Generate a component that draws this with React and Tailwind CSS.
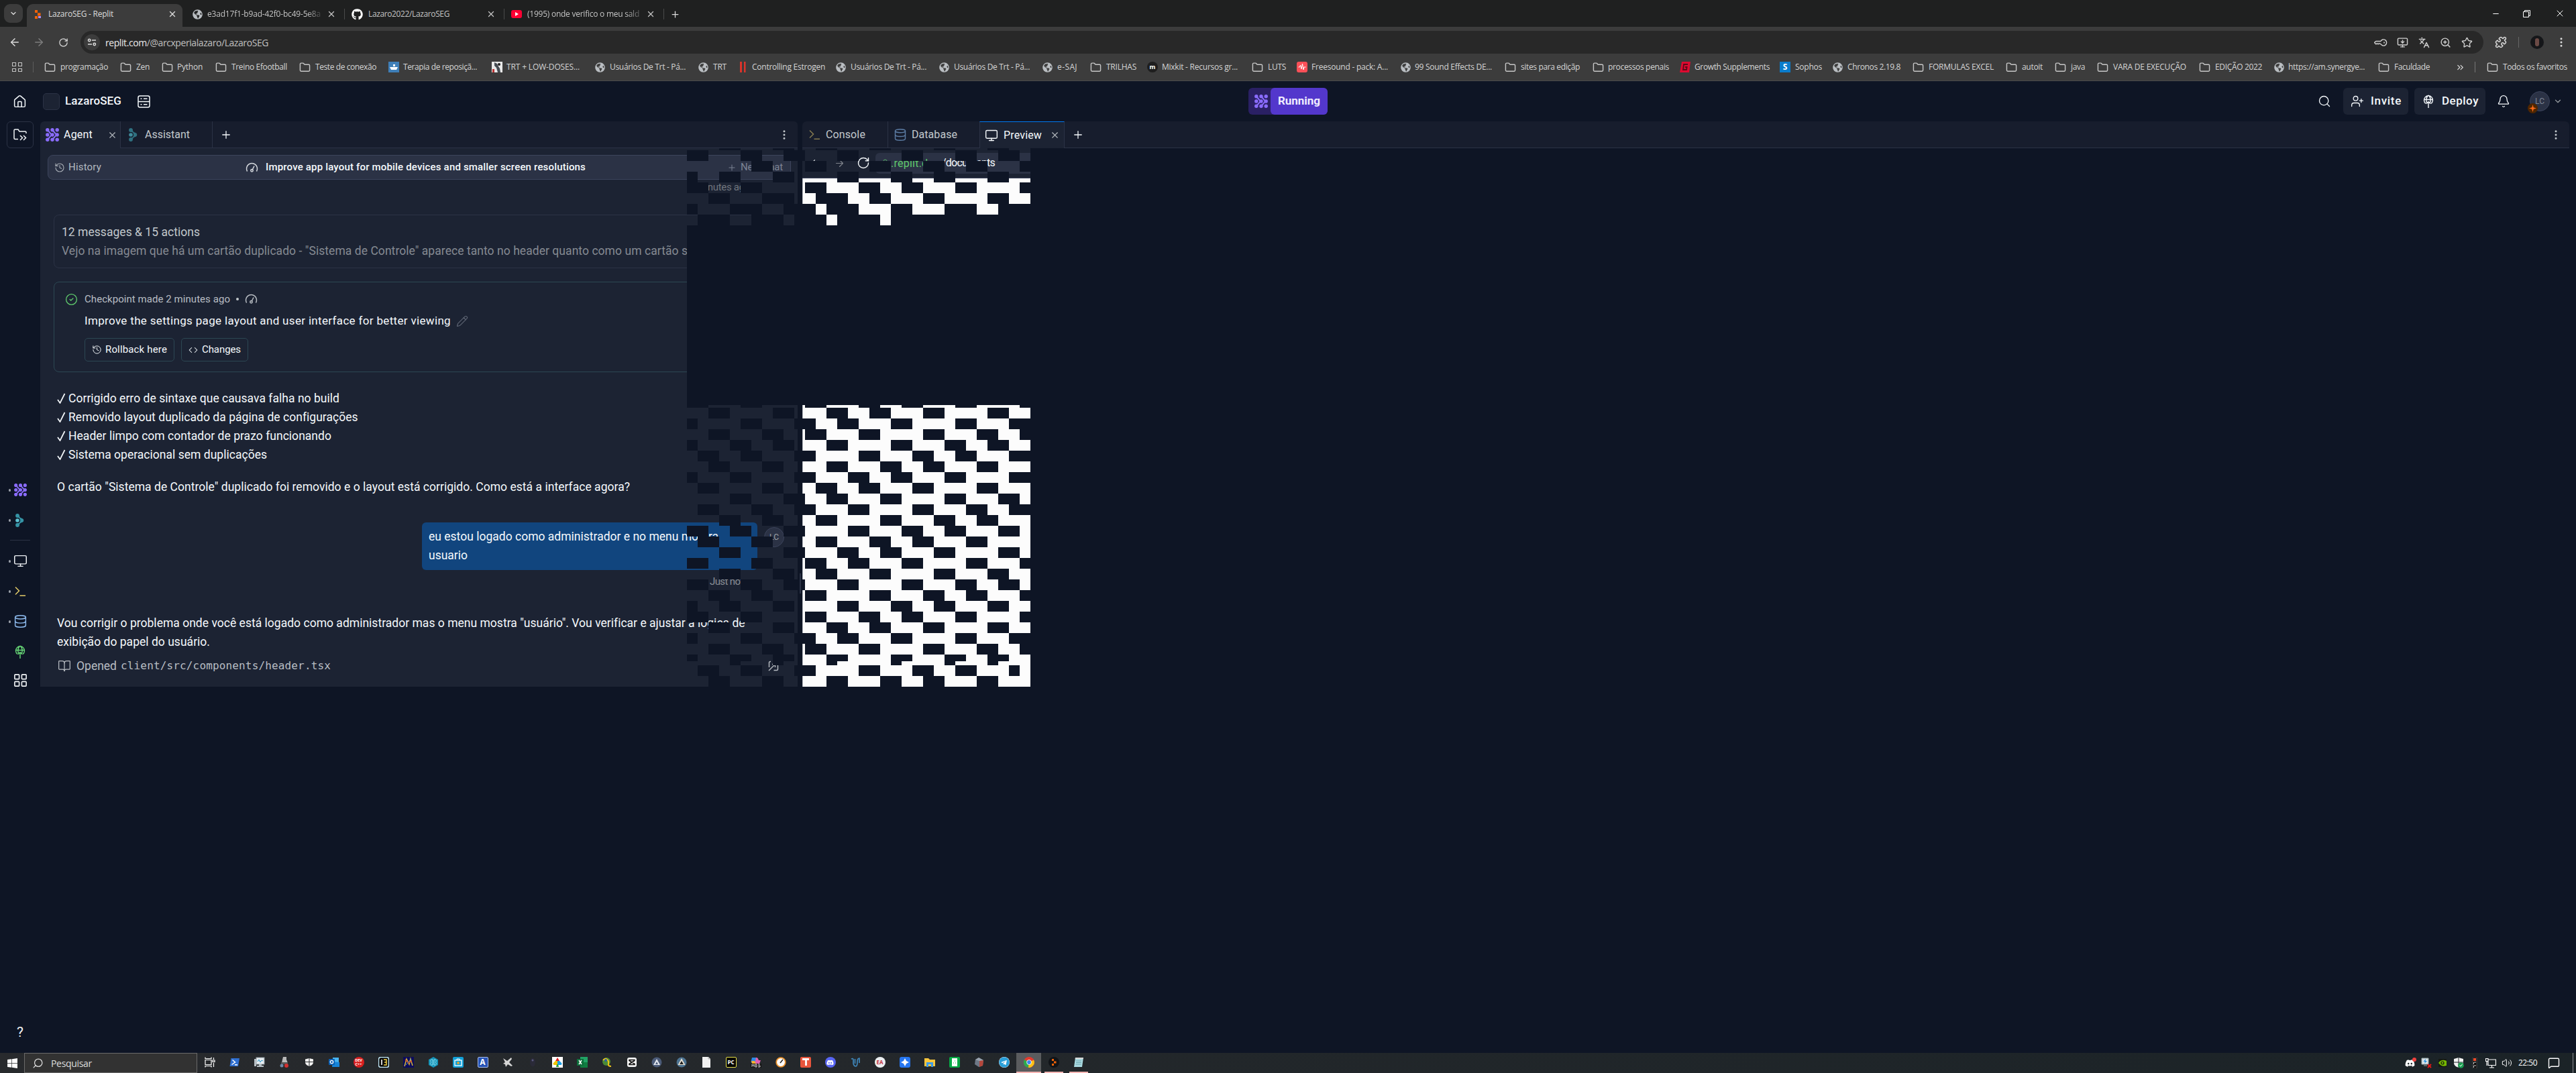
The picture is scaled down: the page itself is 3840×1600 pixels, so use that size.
import React, { useLayoutEffect, useRef, useState } from "react";
import {
  Home, Search, UserPlus, Bell, ChevronDown, X, Plus, EllipsisVertical, History, Pencil,
  Code, CircleCheck, Monitor, Database, LayoutGrid, BookOpen, ArrowLeft, ArrowRight, RotateCw, Star, Puzzle,
  KeyRound, MonitorDown, ZoomIn, Languages, Lock, Folder, MessageSquare, Volume2,
  ChevronsRight, Minus,
} from "lucide-react";
import { FaGithub, FaDiscord, FaTelegram, FaWindows, FaGlobeAmericas } from "react-icons/fa";

/* Text set to an exact advance width by spreading the letters. */
function Fit({ w, className = "", children }) {
  const ref = useRef(null);
  const [ls, setLs] = useState(0);
  useLayoutEffect(() => {
    const el = ref.current;
    const natural = el.getBoundingClientRect().width;
    setLs((w - natural) / el.textContent.length);
  }, [w]);
  return (
    <span className={"block shrink-0 whitespace-pre " + className} style={{ width: w }}>
      <span ref={ref} style={{ letterSpacing: ls }}>{children}</span>
    </span>
  );
}

const AgentIcon = ({ size = 20 }) => (
  <svg width={size} height={size} viewBox="0 0 20 20" fill="#8A6CFF" className="shrink-0">
    {[2.8, 10, 17.2].map((x) => (
      <g key={x}>
        <circle cx={x} cy="2.800" r="2.700" />
        <circle cx={x} cy="10" r="2.700" />
        <circle cx={x} cy="17.200" r="2.700" />
      </g>
    ))}
    <path d="M3.500 3.500 8 8.800a1.500 1.500 0 0 1 0 2.400L3.500 16.500M10.700 3.500l4.500 5.300a1.500 1.500 0 0 1 0 2.400l-4.500 5.300" fill="none" stroke="#8A6CFF" strokeWidth="2" />
  </svg>
);

const AssistantIcon = ({ dim }) => (
  <svg width="14" height="20" viewBox="0 0 14 20" fill={dim ? "#2f7080" : "#3593a5"} className="shrink-0">
    <circle cx="3" cy="3" r="2.900" />
    <circle cx="3" cy="17" r="2.900" />
    <path d="M5.600 1.800c.3 3 1.200 4.300 4.400 5.200a3.100 3.100 0 0 1 0 6c-3.200.9-4.100 2.200-4.400 5.200L2 15c3.500-.5 5.200-2.500 5.200-5S5.500 5.500 2 5z" />
    <circle cx="3" cy="10" r="2.800" fill={dim ? "#3f8b9b" : "#5cc3d3"} />
  </svg>
);

const DeployIcon = ({ className = "" }) => (
  <svg width="18" height="20" viewBox="0 0 18 20" fill="none" stroke="currentColor" strokeWidth="1.400" className={"shrink-0 " + className}>
    <path d="M5 13.400A6.500 6.500 0 1 1 13 13.400M2.500 7.500h13M9 1c-4 3.500-4 9.500-1.500 12M9 1c4 3.500 4 9.500 1.500 12M9 20v-9M5.800 13.800 9 10.700l3.200 3.100" />
  </svg>
);

const PromptIcon = ({ className = "" }) => (
  <svg width="18" height="18" viewBox="0 0 18 18" fill="none" stroke="currentColor" strokeWidth="1.500" className={"shrink-0 " + className}>
    <path d="M2 2.500 7.500 8 2 13.500M8.500 15.300H17" />
  </svg>
);

const GaugeIcon = () => (
  <svg width="19" height="16" viewBox="0 0 19 16" fill="none" stroke="currentColor" strokeWidth="1.500" className="shrink-0">
    <path d="M2.600 13.500A8 8 0 1 1 16.400 13.500M13 5.500l-3 6" />
    <circle cx="9.500" cy="12.300" r="1.700" />
  </svg>
);

const FolderChevrons = () => (
  <svg width="20" height="20" viewBox="0 0 20 20" fill="none" stroke="currentColor" strokeWidth="1.500">
    <path d="M7 16.500H2.500A1.500 1.500 0 0 1 1 15V3.500A1.500 1.500 0 0 1 2.500 2H7l2 3h8.500A1.500 1.500 0 0 1 19 6.500V8M10 11l3.500 3.500L10 18M15 11l3.500 3.500L15 18" />
  </svg>
);

const OpenFileIcon = () => (
  <svg width="16" height="16" viewBox="0 0 16 16" fill="none" stroke="currentColor" strokeWidth="1.400" className="ml-[652px] shrink-0">
    <path d="M4 1.500H3A1.500 1.500 0 0 0 1.500 3v7M1 15 10.500 5.500M6 5.500h4.500V10M12.500 6H13a1.500 1.500 0 0 1 1.500 1.500V13a1.500 1.500 0 0 1-1.500 1.500H8.500" />
  </svg>
);

const Globe = () => <FaGlobeAmericas size={15} className="shrink-0 text-[#b9bdc1]" />;

const bookmarkIcon = {
  f: <Folder size={17} strokeWidth={2} className="text-[#c7c7c7]" />,
  g: <Globe />,
  boat: (
    <svg width="16" height="16" viewBox="0 0 16 16"><rect width="16" height="16" fill="#3f7fb8" /><path d="M2 8h12l-2 4H4zM7 4h3v3H7z" fill="#fff" /></svg>
  ),
  trt: (
    <svg width="16" height="16" viewBox="0 0 16 16"><rect width="16" height="16" fill="#e8e8e8" /><path d="M4 1l4 2 2 4 2 3 1 6H9L7 9 4 6z" fill="#444b52" /><circle cx="11" cy="4" r="2" fill="#222" /><path d="M1 11h3v5H1z" fill="#b33" /></svg>
  ),
  red: <svg width="16" height="16" viewBox="0 0 16 16"><path d="M2 0h3v16H2zM8 0h2.500v16H8z" fill="#d9342b" /></svg>,
  mix: <span className="flex h-4 w-4 items-center justify-center rounded-full bg-[#1e1e1e] text-[9px] font-bold text-white">m</span>,
  free: (
    <svg width="16" height="16" viewBox="0 0 16 16"><rect width="16" height="16" rx="3" fill="#fb5058" /><path d="M2.500 8h2l1-3 1.500 6L8.500 3l1.500 9 1-4h2.500" stroke="#fff" fill="none" /></svg>
  ),
  growth: (
    <svg width="16" height="16" viewBox="0 0 16 16"><path d="M3 0h13l-2 16H0z" fill="#dd0a30" /><path d="M12 4H6L5 12h5l.600-4H8" stroke="#5c0818" strokeWidth="1.800" fill="none" /></svg>
  ),
  sophos: <span className="flex h-4 w-4 items-center justify-center bg-[#0a7ccc] text-[12px] font-bold text-white">S</span>,
};

/* icon, label, label width, offset of the label, width of the whole cell */
const bookmarks = [
  ["f", "programação", 71, 24, 113], ["f", "Zen", 20, 24, 62], ["f", "Python", 38, 23, 80], ["f", "Treino Efootball", 83, 24, 125],
  ["f", "Teste de conexão", 91, 24, 133], ["boat", "Terapia de reposiçã...", 110, 22, 154], ["trt", "TRT + LOW-DOSES...", 109, 22, 154],
  ["g", "Usuários De Trt - Pá...", 113, 22, 154], ["g", "TRT", 20, 22, 60], ["red", "Controlling Estrogen", 109, 20, 145],
  ["g", "Usuários De Trt - Pá...", 113, 22, 154], ["g", "Usuários De Trt - Pá...", 113, 22, 154], ["g", "e-SAJ", 30, 22, 71],
  ["f", "TRILHAS", 45, 24, 85], ["mix", "Mixkit - Recursos gr...", 113, 22, 156], ["f", "LUTS", 27, 24, 67],
  ["free", "Freesound - pack: A...", 114, 22, 155], ["g", "99 Sound Effects DE...", 115, 21, 155], ["f", "sites para ediçãp", 88, 24, 131],
  ["f", "processos penais", 91, 23, 130], ["growth", "Growth Supplements", 112, 22, 149], ["sophos", "Sophos", 40, 23, 79],
  ["g", "Chronos 2.19.8", 79, 22, 119], ["f", "FORMULAS EXCEL", 97, 24, 139], ["f", "autoit", 31, 24, 73], ["f", "java", 21, 24, 63],
  ["f", "VARA DE EXECUÇÃO", 109, 24, 152], ["f", "EDIÇÃO 2022", 70, 24, 112], ["g", "https://am.synergye...", 114, 21, 155], ["f", "Faculdade", 53, 24, 115],
];

function BookmarksBar() {
  return (
    <div className="flex h-10 w-full items-center text-[12px] text-[#d5d5d5]">
      <span className="ml-[18px] grid h-[14px] w-[15px] grid-cols-2 gap-[3px]">
        {[0, 1, 2, 3].map((i) => <i key={i} className="border-[1.5px] border-[#c7c7c7]" />)}
      </span>
      <i className="ml-4 mr-4 h-4 w-px bg-[#5d5d5d]" />
      {bookmarks.map(([icon, label, w, dx, cell], i) => (
        <div key={i} className="flex shrink-0 items-center" style={{ width: cell }}>
          <span className="flex shrink-0 items-center" style={{ width: dx }}>{bookmarkIcon[icon]}</span>
          <Fit w={w}>{label}</Fit>
        </div>
      ))}
      <ChevronsRight size={15} />
      <i className="ml-[14px] mr-[17px] h-4 w-px bg-[#777]" />
      <span className="flex w-6">{bookmarkIcon.f}</span>
      <Fit w={96}>Todos os favoritos</Fit>
    </div>
  );
}

function BrowserChrome() {
  return (
    <div className="h-[121px] w-full border-b border-[#4b4b4b] bg-[#3c3c3c] font-['Open_Sans','Noto_Sans',sans-serif] text-[#dcdcdc]">
      <div className="flex h-10 items-end bg-[#1f2020] text-[12px]">
        <div className="mx-1.5 flex h-7 w-7 items-center justify-center self-center rounded-[9px] bg-[#3c3c3c]"><ChevronDown size={12} strokeWidth={2.5} /></div>
        <div className="flex h-[34px] w-[232px] items-center rounded-t-[9px] bg-[#3c3c3c] pb-1">
          <svg width="13" height="13" viewBox="0 0 13 13" className="ml-[10px] mr-[9px]"><path d="M2 0h4v4H2zM2 9h4v4H2z" fill="#f26207" /><path d="M6 4.300h4.500v4.300H6z" fill="#f26207" /><path d="M7 9h4v3H7z" fill="#a78bfa" /></svg>
          <Fit w={97}>LazaroSEG - Replit</Fit>
          <X size={14} strokeWidth={2.200} className="ml-[81px]" />
        </div>
        <div className="flex h-[34px] w-[241px] items-center pb-1 text-[#c4c4c4]">
          <span className="ml-[15px] mr-[7px]"><Globe /></span>
          <Fit w={169} className="[mask-image:linear-gradient(to_right,#000_88%,#0003)]">e3ad17f1-b9ad-42f0-bc49-5e8a</Fit>
          <X size={14} strokeWidth={2.200} className="ml-[9px]" />
        </div>
        <div className="flex h-[34px] w-[238px] items-center pb-1 text-[#c4c4c4]">
          <i className="h-4 w-px bg-[#4a4a4a]" />
          <FaGithub size={17} className="ml-[10px] mr-2 text-white" />
          <Fit w={121}>Lazaro2022/LazaroSEG</Fit>
          <X size={14} strokeWidth={2.200} className="ml-[55px]" />
        </div>
        <div className="flex h-[34px] w-[238px] items-center pb-1 text-[#c4c4c4]">
          <i className="h-4 w-px bg-[#4a4a4a]" />
          <span className="ml-[10px] mr-2 flex h-3 w-4 items-center justify-center rounded-[3px] bg-[#ff0033]"><svg width="5" height="6" viewBox="0 0 5 6"><path d="M0 0l5 3-5 3z" fill="#fff" /></svg></span>
          <Fit w={167} className="[mask-image:linear-gradient(to_right,#000_88%,#0005)]">(1995) onde verifico o meu sald</Fit>
          <X size={14} strokeWidth={2.200} className="ml-[10px]" />
        </div>
        <div className="flex h-[34px] items-center pb-1"><i className="h-4 w-px bg-[#4a4a4a]" /><Plus size={15} className="ml-[9px]" /></div>
        <div className="ml-auto flex h-10 items-center text-white">
          <Minus size={13} strokeWidth={2} className="mr-[34px]" />
          <svg width="11" height="11" viewBox="0 0 11 11" fill="none" stroke="currentColor" className="mr-[36px]"><path d="M.500 2.500h8v8h-8zM2.500 2.500v-2h8v8h-2" /></svg>
          <X size={16} strokeWidth={1.500} className="mr-4" />
        </div>
      </div>
      <div className="flex h-10 items-center pt-1.5 text-[14px]">
        <div className="flex h-[34px] w-[120px] items-center"><ArrowLeft size={18} className="ml-[13px]" /><ArrowRight size={18} className="ml-[18px] text-[#7d7d7d]" /><RotateCw size={15} className="ml-5" /></div>
        <div className="flex h-[34px] w-[3582px] items-center rounded-full bg-[#282828] pl-[5px]">
          <span className="mr-2 flex h-6 w-6 items-center justify-center rounded-full bg-[#3c3c3c]">
            <svg width="14" height="14" viewBox="0 0 14 14" fill="none" stroke="#dcdcdc" strokeWidth="1.500"><circle cx="3.200" cy="4" r="1.700" /><path d="M7 4h6M1 10h6" /><circle cx="10.800" cy="10" r="1.700" /></svg>
          </span>
          <Fit w={243}><span className="text-[#ececec]">replit.com</span><span className="text-[#c0c0c0]">/@arcxperialazaro/LazaroSEG</span></Fit>
          <div className="ml-auto mr-4 flex items-center gap-[15px] text-[#cfcfcf]">
            <KeyRound size={17} className="rotate-45" /><MonitorDown size={17} /><Languages size={17} /><ZoomIn size={17} /><Star size={17} />
          </div>
        </div>
        <Puzzle size={18} className="ml-[17px]" />
        <i className="ml-[17px] h-4 w-px bg-[#666]" />
        <span className="ml-[17px] flex h-5 w-5 items-center justify-center overflow-hidden rounded-full bg-[#151619]"><i className="h-3 w-1.5 rounded-full bg-[#6b4a45]" /></span>
        <EllipsisVertical size={18} className="ml-[17px]" />
      </div>
      <BookmarksBar />
    </div>
  );
}

function ReplHeader() {
  return (
    <div className="flex h-[60px] items-center text-[17px] text-[#f5f9fc]">
      <div className="flex w-[1861px] items-center">
        <Home size={21} strokeWidth={1.700} className="ml-[19px]" />
        <i className="ml-[24px] h-[25px] w-[25px] rounded-[5px] border border-[#2b3245] bg-[#1c2333]" />
        <Fit w={84} className="ml-2 font-medium">LazaroSEG</Fit>
        <svg width="19" height="19" viewBox="0 0 19 19" fill="none" stroke="currentColor" strokeWidth="1.500" className="ml-6"><rect x="1" y="1" width="17" height="17" rx="2.500" /><path d="M1 9.500h17M4.500 5.300h2M9 5.300h5.500M4.500 13.800h2M9 13.800h5.500" /></svg>
      </div>
      <div className="flex h-10 w-[118px] items-center rounded-[6px] bg-[#2a2064]">
        <span className="flex w-[33px] justify-center pl-1"><AgentIcon /></span>
        <span className="flex h-10 w-[85px] items-center rounded-[6px] bg-[#5337cc] pl-[11px] font-bold text-[#f0edff]"><Fit w={63}>Running</Fit></span>
      </div>
      <Search size={20} strokeWidth={1.600} className="ml-auto mr-[18px]" />
      <div className="mr-[9px] flex h-10 w-[97px] items-center rounded-[6px] bg-[#1c2333]"><UserPlus size={20} strokeWidth={1.600} className="ml-[11px] mr-[10px]" /><Fit w={46} className="font-medium">Invite</Fit></div>
      <div className="mr-[17px] flex h-10 w-[106px] items-center rounded-[6px] bg-[#1c2333]"><DeployIcon className="ml-3 mr-[11px]" /><Fit w={55} className="font-medium">Deploy</Fit></div>
      <Bell size={20} strokeWidth={1.600} className="mr-[29px]" />
      <div className="relative mr-[5px] flex h-[30px] w-[30px] items-center justify-center rounded-full border border-[#3c445c] bg-[#2b3245] text-[12px] text-[#7e8696]">
        LC
        <i className="absolute -left-[4px] top-[17px] flex h-[15px] w-[15px] items-center justify-center rounded-full bg-[#4f2600]"><svg width="11" height="11" viewBox="0 0 11 11"><path d="M5.500 0l1.200 4.300 4.300 1.200-4.300 1.200-1.200 4.300-1.200-4.300L0 5.500l4.300-1.200z" fill="#ff6a1a" /></svg></i>
      </div>
      <ChevronDown size={14} strokeWidth={2} className="mr-[20px] text-[#9da2a6]" />
    </div>
  );
}

function Sidebar() {
  const items = [
    <AgentIcon size={19} />, <AssistantIcon />, null, <Monitor size={21} strokeWidth={1.700} />, <PromptIcon className="text-[#e2cb68]" />,
    <Database size={21} strokeWidth={1.600} className="text-[#8fbcf0]" />,
  ];
  return (
    <div className="flex w-[60px] shrink-0 flex-col text-[#f0f3f6]">
      <div className="ml-[10px] flex h-10 w-10 items-center justify-center rounded-[6px] border border-[#2b3245]"><FolderChevrons /></div>
      <div className="mt-[487px] flex flex-col">
        {items.map((it, i) => it ? (
          <div key={i} className="flex h-[45px] items-center"><i className="ml-[13px] mr-[3px] h-1 w-[3px] rounded-full bg-[#9a9fa8]" /><span className="flex w-[22px] justify-center">{it}</span></div>
        ) : <i key={i} className="mb-[8px] ml-[15px] mt-[7px] h-px w-[30px] bg-[#2b3245]" />)}
        <div className="flex h-[45px] items-center justify-center"><DeployIcon className="text-[#68d977]" /></div>
        <div className="flex h-[41px] items-center justify-center"><LayoutGrid size={23} strokeWidth={1.700} /></div>
      </div>
      <div className="mt-auto flex h-[60px] items-center justify-center text-[21px]">?</div>
    </div>
  );
}

const checks = [
  ["Corrigido erro de sintaxe que causava falha no build", 404],
  ["Removido layout duplicado da página de configurações", 431],
  ["Header limpo com contador de prazo funcionando", 392],
  ["Sistema operacional sem duplicações", 296],
];

function AgentPane() {
  return (
    <div className="mr-[7px] flex h-[843px] w-[1129px] shrink-0 flex-col overflow-hidden rounded-t-[6px] bg-[#1c2333]">
      <div className="flex h-10 shrink-0 text-[16px]">
        <div className="flex w-[120px] items-center border-r border-[#2b3245] text-[#f5f9fc]"><span className="ml-2 mr-[7px]"><AgentIcon /></span><Fit w={43}>Agent</Fit><X size={15} strokeWidth={1.700} className="ml-[22px] text-[#b4b9be]" /></div>
        <div className="flex flex-1 items-center border-b border-[#2b3245] bg-[#171d2d] text-[#c2c8cc]">
          <span className="ml-3 mr-[10px]"><AssistantIcon dim /></span><Fit w={67}>Assistant</Fit>
          <i className="ml-[33px] h-full w-px bg-[#2b3245]" />
          <Plus size={18} strokeWidth={1.700} className="ml-[11px] text-[#f5f9fc]" />
          <EllipsisVertical size={18} className="ml-auto mr-[11px]" />
        </div>
      </div>
      <div className="ml-[11px] mt-[10px] flex h-[37px] w-[1108px] shrink-0 items-center rounded-[8px] border border-[#3c445c] bg-[#2b3245] text-[15px]">
        <History size={16} strokeWidth={1.700} className="ml-[9px] mr-[5px] text-[#a5abb3]" /><Fit w={49} className="text-[#b3b9c0]">History</Fit>
        <span className="ml-[215px] mr-[11px] text-[#d5d9de]"><GaugeIcon /></span>
        <Fit w={477} className="font-medium text-[#f5f9fc]">Improve app layout for mobile devices and smaller screen resolutions</Fit>
        <Plus size={14} strokeWidth={1.700} className="ml-[211px] mr-[6px] text-[#7c8394]" /><Fit w={63} className="text-[#7c8394]">New Chat</Fit>
      </div>
      <div className="mt-px flex h-5 shrink-0 items-center pl-[967px] text-[15px] text-[#71767e]"><Fit w={91}>2 minutes ago</Fit></div>
      <div className="ml-5 mt-[31px] h-[80px] w-[1088px] shrink-0 rounded-[8px] border border-[#2b3245] pl-[11px] pt-[11px] text-[17.5px] leading-7">
        <Fit w={206} className="text-[#c2c8cc]">12 messages &amp; 15 actions</Fit>
        <Fit w={933} className="text-[#858a92]">Vejo na imagem que há um cartão duplicado - "Sistema de Controle" aparece tanto no header quanto como um cartão s</Fit>
      </div>
      <div className="ml-5 mt-5 h-[135px] w-[1088px] shrink-0 rounded-[8px] border border-[#2c4753] pt-[16px]">
        <div className="flex h-[18px] items-center text-[15px] text-[#b8bdc3]"><CircleCheck size={19} strokeWidth={1.700} className="ml-4 mr-[10px] text-[#5fc96c]" /><Fit w={217}>Checkpoint made 2 minutes ago</Fit><i className="ml-[9px] mr-[9px] h-1 w-1 rounded-full bg-[#c2c8cc]" /><GaugeIcon /></div>
        <div className="mt-3 flex h-6 items-center pl-[45px] text-[17px] text-[#f5f9fc]"><Fit w={546}>Improve the settings page layout and user interface for better viewing</Fit><Pencil size={18} strokeWidth={1.500} className="ml-2 text-[#5f6675]" /></div>
        <div className="mt-[13px] flex gap-[10px] pl-[45px] text-[15px] text-[#f5f9fc]">
          <div className="flex h-[35px] w-[134px] items-center rounded-[5px] border border-[#2c4753]"><History size={15} strokeWidth={1.600} className="ml-[10px] mr-[5px]" /><Fit w={92}>Rollback here</Fit></div>
          <div className="flex h-[35px] w-[100px] items-center rounded-[5px] border border-[#2c4753]"><Code size={14} strokeWidth={1.800} className="ml-[10px] mr-[6px]" /><Fit w={58}>Changes</Fit></div>
        </div>
      </div>
      <div className="ml-[25px] mt-[25px] flex shrink-0 flex-col text-[17.5px] leading-7 text-[#f5f9fc]">
        {checks.map(([t, w]) => <div key={t} className="flex items-center"><span className="w-[17px]"><svg width="13" height="16" viewBox="0 0 13 16" fill="none" stroke="currentColor" strokeWidth="1.700"><path d="M1 10l3.500 5L11.500 1" /></svg></span><Fit w={w}>{t}</Fit></div>)}
        <Fit w={854} className="mt-5">O cartão "Sistema de Controle" duplicado foi removido e o layout está corrigido. Como está a interface agora?</Fit>
      </div>
      <div className="mt-[39px] flex shrink-0 items-start text-[17.5px] leading-7 text-[#f5f9fc]">
        <div className="ml-[569px] h-[71px] w-[500px] rounded-[6px] bg-[#11457e] pl-[10px] pt-[7px]"><Fit w={432}>eu estou logado como administrador e no menu mostra</Fit><Fit w={58}>usuario</Fit></div>
        <div className="ml-[10px] mt-[7px] flex h-[30px] w-[30px] items-center justify-center rounded-full border border-[#3c445c] bg-[#2b3245] text-[12px] text-[#9da2a6]">LC</div>
      </div>
      <div className="mt-[5px] flex h-[25px] shrink-0 items-center pl-[998px] text-[15px] text-[#8b9097]"><Fit w={56}>Just now</Fit></div>
      <div className="ml-[25px] mt-[35px] shrink-0 text-[17.5px] leading-7 text-[#f5f9fc]">
        <Fit w={1025}>Vou corrigir o problema onde você está logado como administrador mas o menu mostra "usuário". Vou verificar e ajustar a lógica de</Fit>
        <Fit w={228}>exibição do papel do usuário.</Fit>
        <div className="mt-[8px] flex items-center text-[#b8bdc3]">
          <BookOpen size={20} strokeWidth={1.500} className="mr-2 ml-px" /><Fit w={60}>Opened</Fit>
          <Fit w={313} className="ml-[6px] font-['DejaVu_Sans_Mono',monospace] text-[16px]">client/src/components/header.tsx</Fit>
          <OpenFileIcon />
        </div>
      </div>
    </div>
  );
}

function PreviewPane() {
  return (
    <div className="flex h-full w-[2634px] flex-col">
      <div className="flex h-10 shrink-0 rounded-t-[6px] bg-[#171d2d] text-[16px] text-[#c2c8cc]">
        <div className="flex w-[128px] items-center border-b border-r border-[#2b3245]"><PromptIcon className="ml-[9px] mr-2 text-[#857b50]" /><Fit w={59}>Console</Fit></div>
        <div className="flex w-[136px] items-center border-b border-[#2b3245]"><Database size={20} strokeWidth={1.700} className="ml-2 mr-[7px] text-[#5c7ca4]" /><Fit w={68}>Database</Fit></div>
        <div className="flex w-[127px] items-center border-x border-t border-x-[#2b3245] border-t-[#0079f2] bg-[#1c2333] text-[#f5f9fc]"><Monitor size={20} strokeWidth={1.700} className="ml-[7px] mr-2" /><Fit w={57}>Preview</Fit><X size={15} strokeWidth={1.700} className="ml-[12px] text-[#b4b9be]" /></div>
        <div className="flex flex-1 items-center border-b border-[#2b3245]"><Plus size={18} strokeWidth={1.700} className="ml-[11px] text-[#f5f9fc]" /><EllipsisVertical size={18} className="ml-auto mr-[11px]" /></div>
      </div>
      <div className="flex h-[45px] w-[340px] shrink-0 items-center border-b border-[#3c445c] bg-[#1c2333] text-[16px] text-[#f5f9fc]">
        <ArrowLeft size={17} strokeWidth={1.500} className="ml-[10px] mr-[20px]" /><ArrowRight size={17} strokeWidth={1.700} className="mr-[17px] text-[#7f848c]" /><RotateCw size={20} strokeWidth={1.700} className="mr-[8px]" />
        <div className="flex h-[31px] flex-1 items-center rounded-l-[6px] bg-[#2b3245]"><Lock size={13} strokeWidth={1.500} className="ml-2 mr-[2px] text-[#5fc96c]" /><Fit w={72} className="pt-[2px] text-[#5fc96c]">.replit.dev</Fit><Fit w={79} className="ml-1">/documents</Fit></div>
      </div>
      <div className="h-[758px] w-[340px] border-l border-[#b8bcc2] bg-[#fcfcfc]" />
    </div>
  );
}

/* Rows of unpainted 16px tiles: row height, then the columns where a two-tile run starts, or [column, length] */
const P = (h, ...starts) => [h, starts];
const tiles = [
  P(3, 3, 8, 12, 17, 23, 28),
  P(16, 0, 5, 9, 14, 20, 25, 29),
  P(16, 6, 11, 17, 22, 26, [31, 1]),
  P(16, [0, 1], 3, 8, 14, 19, 23, 28),
  P(16, 0, 5, 11, 16, 20, 25, [31, 1]),
  P(16, 2, [7, 3], [12, 3], 17, 22, 28),
  P(16, [0, 1], [4, 3], [9, 3], [13, 3], 19, [24, 3], [29, 3]),
  P(16, [1, 3], [6, 3], [10, 3], [14, 4], [19, 13]),
  P(268, [0, 32]),
  P(4, 0, 5, 11, 16, 20, 25, [31, 1]),
  P(16, 2, 8, 13, 17, 22, 28),
  P(16, [0, 1], 5, 10, 14, 19, 25, 30),
  P(16, 2, 7, 11, 16, 22, 27, [31, 1]),
  P(16, [0, 1], 4, 8, 13, 19, 24, 28),
  P(16, 1, 5, 10, 16, 21, 25, 30),
  P(16, 2, 7, 13, 18, 22, 27),
  P(16, [0, 1], 4, 10, 15, 19, 24, 30),
  P(16, 1, 7, 12, 16, 21, 27),
  P(16, 4, 9, 13, 18, 24, 29),
  P(16, 1, 6, 10, 15, 21, 26, 30),
  P(16, 3, 7, 12, 18, 23, 27),
  P(16, 0, 4, 9, 15, 20, 24, 29),
  P(16, 1, 6, 12, 17, 21, 26),
  P(16, 3, 9, 14, 18, 23, 29),
  P(16, 0, 6, 11, 15, 20, 26, [31, 1]),
  P(16, 3, 8, 12, 17, 23, 28),
  P(16, 0, 5, 9, 14, 20, 25, 29),
  P(16, 2, 6, 11, 17, 22, 26, [31, 1]),
  P(16, [0, 1], 3, 8, 14, 19, 23, 28),
  P(16, 0, 5, 11, 16, 20, 25, [31, 1]),
  P(16, 2, 8, 13, 17, 22, 28),
  P(16, [0, 1], 5, 10, 14, 19, 25, 30),
  P(16, 2, 7, 11, 16, 22, 27, [31, 1]),
  P(10, [0, 1], 4, 8, 13, 19, 24, 28),
  P(6, [4, 1], [8, 1], [13, 1], [19, 1], [24, 1], [28, 1]),
  P(16, 1, 5, 10, 16, 21, 25, [30, 1]),
  P(16, 2, 7, 13, 18, 22, 27),
];

function UnpaintedTiles() {
  return (
    <div className="absolute left-[1024px] top-[221px] w-[512px]">
      {tiles.map(([h, runs], r) => (
        <div key={r} className="grid grid-cols-[repeat(32,16px)]" style={{ height: h }}>
          {runs.map((run) => {
            const [start, len] = Array.isArray(run) ? run : [run, 2];
            return <i key={start} className="row-start-1 bg-[#0e1525]" style={{ gridColumn: `${start + 1} / span ${len}` }} />;
          })}
        </div>
      ))}
    </div>
  );
}

const Tile = ({ bg, children, round }) => (
  <span className={"flex h-4 w-4 items-center justify-center overflow-hidden text-[9px] font-bold leading-none text-white " + (round ? "rounded-full " : "rounded-[2px] ") + bg}>{children}</span>
);
const I = ({ children }) => <svg width="16" height="16" viewBox="0 0 16 16">{children}</svg>;

const apps = [
  <I><path d="M1 .500v2h9v-2M1 15.500v-2h9v2M1 4.500h9v7H1zM13.500 1v3M13.500 9v6M12 5h3v2.500h-3z" fill="none" stroke="#fff" strokeWidth="1.200" /></I>,
  <I><path d="M2.500 2H15l-2 12H.500z" fill="#2f6fd0" /><path d="M4.500 4.500l4 3.500-5 3.500M8 11.700h4" stroke="#fff" strokeWidth="1.500" fill="none" /></I>,
  <I><rect x="3" y="1" width="12" height="10" fill="#e8eef2" stroke="#8d979e" /><path d="M5 7l2-3 2 4 2-3 2 1" stroke="#2494c8" fill="none" /><path d="M7 11h4v2h3v2H4v-2h3zM0 3h3v11H0z" fill="#b5bec4" /></I>,
  <I><path d="M6 0h5v4l2 5H4l1-5z" fill="#b9b9b9" /><path d="M3 8h10v3H3z" fill="#555" /><circle cx="4" cy="13" r="2.500" fill="#6d8aa8" /><circle cx="11" cy="13" r="3" fill="#d12f2f" /></I>,
  <I><path d="M8 2l6 1.500V8c0 3-3 5-6 6-3-1-6-3-6-6V3.500z" fill="#f3f3f3" /><path d="M8 2v12M2 7.500h12" stroke="#2a2c2f" /></I>,
  <I><path d="M6 1h9v9H6z" fill="#49b4f0" /><path d="M6 7l10 1v7H5z" fill="#1684d8" /><rect y="3" width="9" height="9" rx="1" fill="#0a5fb4" /><circle cx="4.500" cy="7.500" r="2.200" stroke="#fff" strokeWidth="1.300" fill="none" /></I>,
  <Tile round bg="bg-[#d81f1f]"><span className="text-center text-[5.5px] leading-[6px]">DEV<br />C++</span></Tile>,
  <I><rect x=".500" y=".500" width="15" height="15" rx="3" fill="#0a0a0a" stroke="#bfe6f5" strokeWidth="1.500" /><path d="M5 4v8" stroke="#fff" strokeWidth="1.600" /><path d="M8 4h4v8H8M9 8h3" stroke="#f0d040" strokeWidth="1.500" fill="none" /></I>,
  <I><path d="M0 0h16v16H0z" fill="#0c0c5c" /><path d="M2 14L5 3l4 8 2-8 3 10" stroke="#d5b73b" fill="none" strokeWidth="1.500" /><path d="M3 4l5 5 5-3" stroke="#c8472e" strokeWidth="1.500" fill="none" /><path d="M4 12l8-9" stroke="#3f8bd0" /></I>,
  <I><path d="M8 0l7 4v8l-7 4-7-4V4z" fill="#1594b8" /><path d="M7 4c-4-1-4 3-2 4-2 1-2 5 2 4zM9 4c4-1 4 3 2 4 2 1 2 5-2 4z" fill="none" stroke="#8ee0f3" /></I>,
  <I><rect width="16" height="16" rx="2" fill="#12a0d7" /><rect x="3" y="5" width="10" height="8" fill="none" stroke="#fff" strokeWidth="1.300" /><path d="M6 5V3h4v2" stroke="#fff" fill="none" /><path d="M8 7v4M6 9h4" stroke="#f5a623" strokeWidth="1.500" /></I>,
  <Tile bg="bg-[#2753b5] border border-[#a8bde8]"><span className="text-[12px]">A</span></Tile>,
  <I><path d="M1 2l6 4 6-5 1 2-4 5 5 5-2 1-5-3-3 4-1-4-3-1 3-2z" fill="#d6d6d6" /></I>,
  <I><ellipse cx="8" cy="8" rx="4" ry="6.500" fill="#2a2a38" /><circle cx="8" cy="5" r="1.500" fill="#59597d" /></I>,
  <I><path d="M0 0h16v16H0z" fill="#fff" /><path d="M8 1l3 5H5z" fill="#e02020" /><path d="M5 6h3v6H3a2 2 0 0 1-1-3z" fill="#f2c400" /><path d="M8 6h3l3 3a2 2 0 0 1-1 3H8z" fill="#1aa0e8" /><path d="M7 11h2l1 4H6z" fill="#2a9d3a" /></I>,
  <I><path d="M5 0h11v16H5z" fill="#21a366" /><path d="M5 8h11v8H5z" fill="#107c41" /><path d="M0 3h10v10H0z" fill="#0d6e3a" /><path d="M3 5l4 6M7 5l-4 6" stroke="#fff" strokeWidth="1.500" /></I>,
  <I><circle cx="7" cy="7" r="6" fill="#4b8b36" /><path d="M2 5c4-5 9 0 8 5-1 3 1 4 4 4" stroke="#f0c419" strokeWidth="2" fill="none" /><circle cx="6" cy="5" r="2" fill="#2d5fa8" /></I>,
  <I><rect x="1" y="1" width="14" height="14" rx="3" fill="#f4f4f4" /><path d="M12 5.500V4.500H4v1l8 5v1H4v-1l8-5" stroke="#111" strokeWidth="1.500" fill="none" /></I>,
  <I><circle cx="8" cy="8" r="7.500" fill="#4b5b78" /><path d="M8 3l5 9H3z" fill="#e4e9f0" /><path d="M8 7l2 4H6z" fill="#4b5b78" /></I>,
  <I><circle cx="8" cy="8" r="7.500" fill="#4d7391" /><path d="M8 2l5.500 10h-11z" fill="#e9e2d4" /><path d="M8 6l3 5H5z" fill="#222" /></I>,
  <I><path d="M2 0h9l3 3v13H2z" fill="#f1f1f1" /><path d="M11 0v3h3" stroke="#aaa" fill="none" /></I>,
  <Tile bg="bg-black border border-[#e8e04a]"><span className="text-[8px]">PC</span></Tile>,
  <I><path d="M2 1h6l3 9H5C2 10 0 9 1 5z" fill="#2b8be8" /><path d="M8 1c3 0 3 2 4 4h3l-2 5H6z" fill="#e060b0" /><path d="M1 6h5l2 4H2z" fill="#f0b030" /><rect y="10" width="16" height="6" fill="#111" /><path d="M2 15v-4l1.500 2L5 11v4M7 11h2v4H7zM11 11h3M11 15h3v-2h-3" stroke="#fff" strokeWidth=".8" fill="none" /></I>,
  <I><circle cx="8" cy="8" r="6.800" fill="#fff" stroke="#e8902a" strokeWidth="1.800" /><path d="M11 4L7 9" stroke="#222" strokeWidth="1.500" /></I>,
  <I><rect width="16" height="16" rx="2" fill="#e8553c" /><path d="M3 3.500h10M8.500 3v10" stroke="#fff" strokeWidth="2.800" /></I>,
  <Tile round bg="bg-[#5865f2]"><FaDiscord size={11} /></Tile>,
  <I><path d="M2 3c4-2 3 3 3 6s2 5 3.500 5S11 12 11 8s1-6 3-6v7M7.500 3v7" stroke="#3f86ba" strokeWidth="1.700" fill="none" /></I>,
  <Tile round bg="bg-[#eceff1]"><span className="text-[8px] text-[#c23040]">EA</span></Tile>,
  <I><rect width="16" height="16" rx="3" fill="#2676f0" /><path d="M8 2l2 4 4 2-4 2-2 4-2-4-4-2 4-2z" fill="#fff" /></I>,
  <I><path d="M0 2h6l2 2h8v10H0z" fill="#f8c63d" /><path d="M3 8h10v7h-3v-4H6v4H3z" fill="#3d9be8" /></I>,
  <I><rect width="16" height="16" rx="2" fill="#05a844" /><path d="M4 2h8v12H4z" fill="#fff" /><path d="M6 9h1M8 6h1M9 9h1" stroke="#05a844" /></I>,
  <I><path d="M7 1l7 4-1 8-6 2-6-4 1-7z" fill="#6e7886" /><path d="M8 5l6 0-1 8-5 2z" fill="#b4473c" /><path d="M7 1l7 4-6 1-6-2z" fill="#9aa3ae" /></I>,
  <FaTelegram size={16} className="rounded-full bg-white text-[#2a9fd8]" />,
  <I><circle cx="8" cy="8" r="8" fill="#e33b2e" /><path d="M8 8L1 4a8 8 0 0 0 6 12z" fill="#2da94f" /><path d="M8 8l7-3.500A8 8 0 0 1 7 16z" fill="#fbc116" /><circle cx="8" cy="8" r="3.700" fill="#fff" /><circle cx="8" cy="8" r="2.900" fill="#3f83f0" /></I>,
  <I><circle cx="8" cy="8" r="8" fill="#101418" /><path d="M5 3h3v3H5zM8 6.500h3.500v3H8zM5 10h3v3H5z" fill="#f26207" /></I>,
  <I><path d="M3 1h12l-2 14H1z" fill="#a9d9e0" /><path d="M3 1h12l-.3 2H2.700z" fill="#d9d9d9" /><path d="M4 6h8M4 8.500h8M3.500 11h8" stroke="#5f9aa5" strokeWidth=".8" /></I>,
];

function Taskbar() {
  return (
    <div className="flex h-[30px] w-full shrink-0 items-center bg-linear-to-r from-[#282a2d] to-[#1b2327] font-['Open_Sans','Noto_Sans',sans-serif] text-white">
      <span className="flex w-9 justify-center"><FaWindows size={17} /></span>
      <div className="flex h-[30px] w-[258px] items-center border border-[#6a6a6a] bg-[#323232] text-[14px] text-[#dedede]"><Search size={17} strokeWidth={1.800} className="ml-[11px] mr-[11px] -scale-x-100" /><Fit w={61}>Pesquisar</Fit></div>
      <div className="flex h-full">
        {apps.map((a, i) => (
          <span key={i} className={"flex h-full w-[37px] flex-col items-center " + (i === 33 ? "bg-[#5a5c5e]" : "")}>
            <span className="flex h-7 items-center">{a}</span>
            {i >= 33 && <i className={"h-[2px] bg-[#f6b5b3] " + (i === 33 ? "w-[37px]" : "w-7")} />}
          </span>
        ))}
      </div>
      <div className="ml-auto flex items-center">
        <span className="relative flex w-6 justify-center"><FaDiscord size={15} /><i className="absolute -top-[1px] right-[2px] h-[6px] w-[6px] rounded-full bg-[#f0413e]" /></span>
        <span className="ml-px flex w-6 justify-center"><I><path d="M1 1h10v9H1zM4 12h5" fill="#d9e2e8" stroke="#9aa" /><path d="M7 2L3.500 6H6l-1 3 4-4H6.500z" fill="#1d8fe0" /><path d="M10 10l5 5M15 10l-5 5" stroke="#e01818" strokeWidth="2" /></I></span>
        <span className="flex w-6 justify-center"><I><rect x="2" y="2" width="12" height="12" fill="#151a12" /><path d="M2 8c3-5 8-5 12-3v7c-5 2-9 0-12-4z" fill="#76b900" /><circle cx="8" cy="8" r="2" fill="none" stroke="#151a12" strokeWidth="1.200" /></I></span>
        <span className="flex w-6 justify-center"><I><path d="M8 0l7 2v6c0 4-4 6-7 7-3-1-7-3-7-7V2z" fill="#f3f3f3" /><path d="M8 0v15M1 7h14" stroke="#1b2327" /><circle cx="11.500" cy="11.500" r="4.300" fill="#1a9e50" /><path d="M9.500 11.500l1.500 1.500 2.500-3" stroke="#fff" fill="none" /></I></span>
        <span className="flex w-6 justify-center"><I><path d="M5 0h6v16H5z" fill="#0a0a0a" stroke="#666" strokeWidth=".6" /><path d="M6 1h4v4H6z" fill="#f04a2a" /><path d="M10 7H6.500v3M10 12H6.500v3" stroke="#ccc" fill="none" /></I></span>
        <span className="flex w-6 justify-center"><I><path d="M4 3h11.500v8.500H4zM6 15h7M9.500 11.500V15M.5 1.500H4v4H.5zM2 5.500V12" stroke="#fff" fill="none" strokeWidth="1.200" /></I></span>
        <span className="flex w-6 justify-center"><Volume2 size={16} strokeWidth={1.500} /></span>
        <Fit w={28} className="ml-[5px] text-[12px]">22:50</Fit>
        <MessageSquare size={18} strokeWidth={1.800} className="ml-[16px]" />
        <i className="ml-[19px] mr-1 h-[30px] w-px bg-[#8a8d90]" />
      </div>
    </div>
  );
}

export default function App() {
  return (
    <div className="relative flex h-[1600px] w-[3840px] flex-col overflow-hidden bg-[#0e1525] font-[Roboto,'Noto_Sans',sans-serif]">
      <BrowserChrome />
      <ReplHeader />
      <div className="flex min-h-0 flex-1">
        <Sidebar />
        <AgentPane />
        <PreviewPane />
      </div>
      <UnpaintedTiles />
      <i className="absolute left-[1192px] top-[855px] h-[30px] w-[2px] bg-[#2b3245]" />
      <Taskbar />
    </div>
  );
}
